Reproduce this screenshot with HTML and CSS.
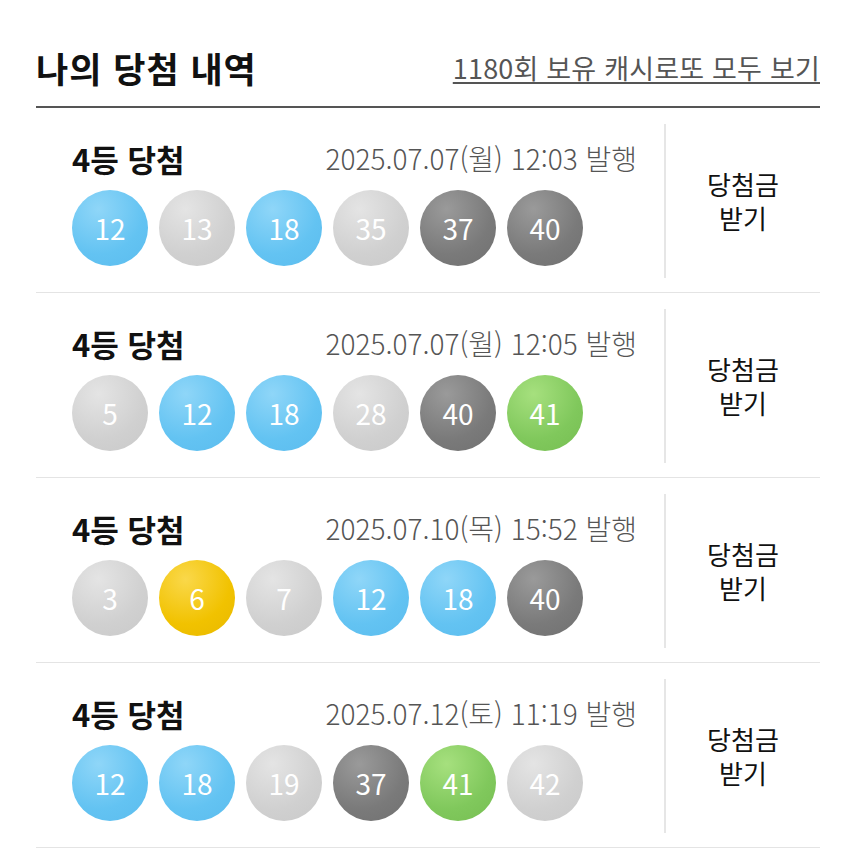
FILE: index.html
```html
<!DOCTYPE html>
<html lang="ko">

<head>
    <meta charset="UTF-8">
    <title>나의 당첨 내역</title>
    <link rel="stylesheet" href="styles.css">
</head>

<body>
    <div class="wrap">
        <div class="header">
            <h1>나의 당첨 내역</h1>
            <a class="more" href="#">1180회 보유 캐시로또 모두 보기</a>
        </div>

        <ul class="list">
            <li class="row">
                <div class="info">
                    <div class="top">
                        <span class="rank">4등 당첨</span>
                        <span class="date">2025.07.07(월) 12:03 발행</span>
                    </div>
                    <div class="balls">
                        <span class="ball blue">12</span>
                        <span class="ball gray">13</span>
                        <span class="ball blue">18</span>
                        <span class="ball gray">35</span>
                        <span class="ball dark">37</span>
                        <span class="ball dark">40</span>
                    </div>
                </div>
                <a class="claim" href="#">당첨금<br>받기</a>
            </li>
            <li class="row">
                <div class="info">
                    <div class="top">
                        <span class="rank">4등 당첨</span>
                        <span class="date">2025.07.07(월) 12:05 발행</span>
                    </div>
                    <div class="balls">
                        <span class="ball gray">5</span>
                        <span class="ball blue">12</span>
                        <span class="ball blue">18</span>
                        <span class="ball gray">28</span>
                        <span class="ball dark">40</span>
                        <span class="ball green">41</span>
                    </div>
                </div>
                <a class="claim" href="#">당첨금<br>받기</a>
            </li>
            <li class="row">
                <div class="info">
                    <div class="top">
                        <span class="rank">4등 당첨</span>
                        <span class="date">2025.07.10(목) 15:52 발행</span>
                    </div>
                    <div class="balls">
                        <span class="ball gray">3</span>
                        <span class="ball yellow">6</span>
                        <span class="ball gray">7</span>
                        <span class="ball blue">12</span>
                        <span class="ball blue">18</span>
                        <span class="ball dark">40</span>
                    </div>
                </div>
                <a class="claim" href="#">당첨금<br>받기</a>
            </li>
            <li class="row">
                <div class="info">
                    <div class="top">
                        <span class="rank">4등 당첨</span>
                        <span class="date">2025.07.12(토) 11:19 발행</span>
                    </div>
                    <div class="balls">
                        <span class="ball blue">12</span>
                        <span class="ball blue">18</span>
                        <span class="ball gray">19</span>
                        <span class="ball dark">37</span>
                        <span class="ball green">41</span>
                        <span class="ball gray">42</span>
                    </div>
                </div>
                <a class="claim" href="#">당첨금<br>받기</a>
            </li>
        </ul>
    </div>
</body>

</html>
```

FILE: styles.css
```css
body {
    margin: 0;
    font-family: "Noto Sans CJK KR", "Noto Sans", sans-serif;
    background-color: #fff;
    color: #111;
}

.wrap {
    padding: 38px 36px 0;
}

.header {
    display: flex;
    justify-content: space-between;
    align-items: center;
    height: 58px;
    padding-bottom: 10px;
    border-bottom: 2px solid #555;
}

.header h1 {
    margin: 0;
    font-size: 35px;
    font-weight: bold;
    letter-spacing: 1px;
}

.more {
    font-size: 27px;
    letter-spacing: 0.2px;
    color: #555;
    text-decoration: underline;
    text-decoration-thickness: 2px;
    text-underline-offset: 3px;
}

.list {
    list-style: none;
    margin: 0;
    padding: 0;
}

.row {
    display: flex;
    padding: 16px 0 14px;
    border-bottom: 1px solid #e4e4e4;
}

.info {
    flex: 1;
    padding: 14px 27px 12px 36px;
    border-right: 2px solid #e6e6e6;
}

.top {
    display: flex;
    justify-content: space-between;
    align-items: center;
    height: 40px;
    margin-bottom: 12px;
}

.rank {
    font-size: 31px;
    font-weight: bold;
}

.date {
    font-size: 28px;
    color: #555;
    font-weight: 300;
}

.balls {
    display: flex;
    gap: 11px;
}

.ball {
    width: 76px;
    height: 76px;
    border-radius: 50%;
    display: flex;
    align-items: center;
    justify-content: center;
    color: #fff;
    font-size: 28px;
}

.blue {
    background: radial-gradient(circle at 35% 25%, #8fd6f8, #63c3f2 60%, #5bbcee);
}

.gray {
    background: radial-gradient(circle at 35% 25%, #e4e4e4, #d0d0d0 60%, #c9c9c9);
}

.dark {
    background: radial-gradient(circle at 35% 25%, #9a9a9a, #7a7a7a 60%, #707070);
}

.green {
    background: radial-gradient(circle at 35% 25%, #a6e07e, #80c85c 60%, #76be52);
}

.yellow {
    background: radial-gradient(circle at 35% 25%, #fad84a, #f1c200 60%, #e8b800);
}

.claim {
    width: 154px;
    display: flex;
    align-items: center;
    justify-content: center;
    text-align: center;
    font-size: 26px;
    line-height: 34px;
    color: #111;
    text-decoration: none;
}
```
